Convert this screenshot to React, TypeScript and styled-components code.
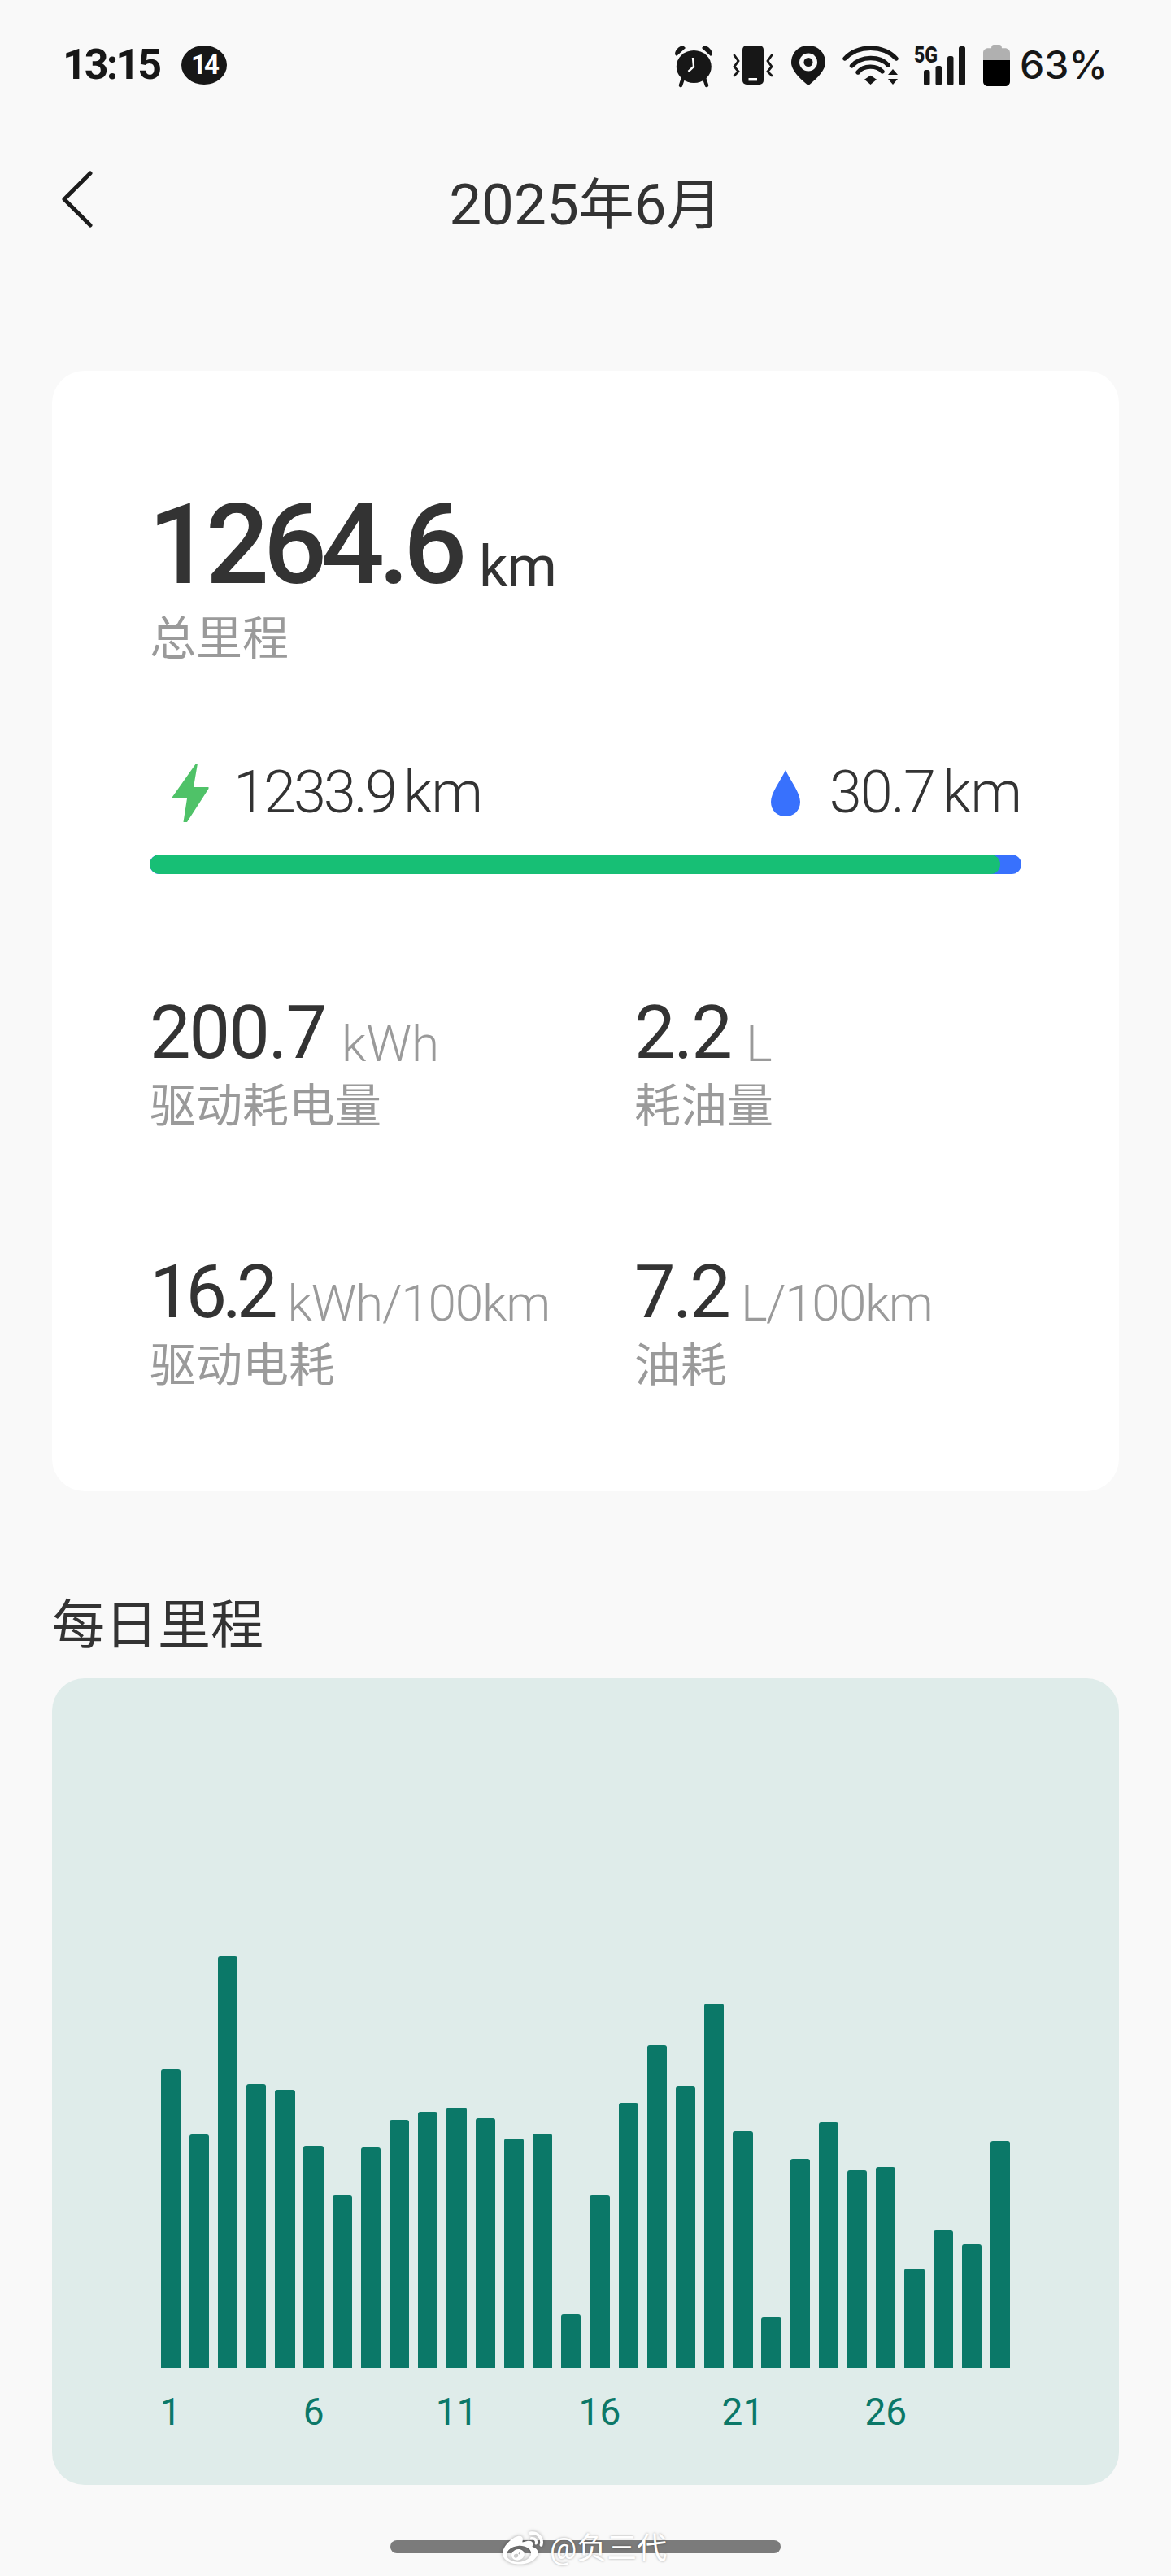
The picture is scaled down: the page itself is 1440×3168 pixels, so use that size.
import React from 'react';
import styled, { createGlobalStyle } from 'styled-components';
import { FaWeibo } from 'react-icons/fa';

const Global = createGlobalStyle`
  html, body { margin: 0; padding: 0; background: #f9f9f9; }
  * { box-sizing: border-box; }
  body { font-family: Roboto, "Noto Sans CJK SC", sans-serif; color: #333; }
`;

const Page = styled.div`
  position: relative;
  width: 1440px;
  height: 3168px;
  overflow: hidden;
  background: #f9f9f9;
`;

const StatusBar = styled.div`
  height: 160px;
  padding: 0 78px 0 77px;
  display: flex;
  align-items: center;
  justify-content: space-between;
`;
const StatusLeft = styled.div`
  display: flex;
  align-items: center;
  gap: 27px;
`;
const StatusRight = styled.div`
  display: flex;
  align-items: center;
`;
const Clock = styled.span`
  font: 700 52px/60px Roboto, sans-serif;
  letter-spacing: -3px;
  color: #171717;
`;
const Badge = styled.span`
  width: 56px;
  height: 48px;
  border-radius: 50%;
  background: #171717;
  color: #fff;
  display: flex;
  align-items: center;
  justify-content: center;
  font: 700 33px/48px Roboto, sans-serif;
  letter-spacing: -3px;
`;
const StatusIcon = styled.svg<{ $ml?: number }>`
  display: block;
  flex: none;
  overflow: visible;
  margin-left: ${(p) => p.$ml ?? 0}px;
`;
const Percent = styled.span`
  margin-left: 12px;
  font: 500 48px/60px Inter, sans-serif;
  color: #171717;
`;

const Header = styled.div`
  height: 180px;
  padding: 0 76px;
  display: flex;
  align-items: center;
  position: relative;
`;
const BackIcon = styled.svg`
  display: block;
  margin-top: -10px;
`;
const Title = styled.h1`
  position: absolute;
  left: 0;
  right: 0;
  top: 50px;
  margin: 0;
  text-align: center;
  font-weight: 400;
  font-size: 68px;
  line-height: 84px;
  color: #333;
`;
const TitleNum = styled.span`
  font-size: 71px;
`;

const Card = styled.section`
  margin: 116px 64px 0;
  height: 1378px;
  padding: 154px 120px 0;
  background: #fff;
  border-radius: 40px;
`;
const Total = styled.div`
  height: 120px;
  line-height: 120px;
  white-space: nowrap;
  font-size: 138px;
  font-weight: 500;
  letter-spacing: -7.6px;
  margin-left: -2px;
  color: #333;
`;
const TotalUnit = styled.span`
  margin-left: 22px;
  font-size: 70px;
  font-weight: 400;
  letter-spacing: -1px;
  vertical-align: -4px;
`;
const Label = styled.div`
  height: 60px;
  line-height: 60px;
  font-size: 57px;
  color: #9a9a9a;
  white-space: nowrap;
`;
const TotalLabel = styled(Label)`
  margin-top: 26px;
`;
const Split = styled.div`
  margin-top: 119px;
  height: 80px;
  display: flex;
  justify-content: space-between;
  align-items: center;
  padding: 0 0 0 28px;
`;
const SplitItem = styled.div<{ $gap: number }>`
  display: flex;
  align-items: center;
  gap: ${(p) => p.$gap}px;
`;
const SplitValue = styled.span<{ $spacing: number }>`
  font-size: 72px;
  line-height: 80px;
  font-weight: 300;
  letter-spacing: ${(p) => p.$spacing}px;
  white-space: nowrap;
`;
const SplitUnit = styled.span`
  margin-left: 10px;
  letter-spacing: -1px;
`;
const Progress = styled.div`
  margin-top: 36px;
  height: 24px;
  border-radius: 12px;
  background: #3871fd;
  overflow: hidden;
`;
const ProgressFill = styled.div`
  height: 100%;
  border-radius: 12px;
  background: #17bf75;
`;
const Stats = styled.div`
  margin-top: 146px;
  display: grid;
  grid-template-columns: 596px 1fr;
  row-gap: 149px;
`;
const Stat = styled.div``;
const StatValue = styled.div`
  height: 100px;
  line-height: 100px;
  font-size: 90px;
  font-weight: 400;
  white-space: nowrap;
  color: #333;
`;
const StatNumber = styled.span<{ $spacing: number }>`
  letter-spacing: ${(p) => p.$spacing}px;
`;
const StatUnit = styled.span<{ $gap: number; $spacing: number }>`
  margin-left: ${(p) => p.$gap}px;
  font-size: 62px;
  font-weight: 300;
  letter-spacing: ${(p) => p.$spacing}px;
  color: #9a9a9a;
  vertical-align: -4px;
`;
const StatLabel = styled(Label)`
  margin-top: 10px;
`;

const SectionTitle = styled.h2`
  margin: 125px 64px 0;
  height: 80px;
  line-height: 80px;
  font-size: 65px;
  font-weight: 400;
  color: #333;
`;
const ChartPanel = styled.section`
  margin: 25px 64px 0;
  height: 992px;
  padding: 248px 0 0 133.5px;
  background: #dfecea;
  border-radius: 40px;
`;
const Columns = styled.div`
  display: flex;
  gap: 10.9px;
`;
const Column = styled.div`
  width: 24.3px;
  display: flex;
  flex-direction: column;
  align-items: center;
`;
const BarSlot = styled.div`
  width: 100%;
  height: 600px;
  display: flex;
  align-items: flex-end;
`;
const Bar = styled.div`
  width: 100%;
  background: #0b7868;
  border-radius: 3px 3px 0 0;
`;
const DayLabel = styled.div`
  margin-top: 29px;
  height: 50px;
  line-height: 50px;
  font-size: 46px;
  color: #0b7868;
  white-space: nowrap;
`;

const HomeBar = styled.div`
  margin: 68px auto 0;
  width: 480px;
  height: 16px;
  border-radius: 8px;
  background: #7b7b7b;
`;
const Watermark = styled.div`
  position: absolute;
  left: 618px;
  top: 3110px;
  display: flex;
  align-items: center;
  gap: 8px;
  color: #fff;
  font-size: 37px;
  line-height: 44px;
  text-shadow: 0 0 3px rgba(0, 0, 0, 0.35);
  svg {
    filter: drop-shadow(0 0 2px rgba(0, 0, 0, 0.35));
  }
`;

const tops = [452, 649, 112, 498, 515, 682, 832, 689, 605, 581, 568, 599, 661, 646, 1191, 833, 554, 379, 505, 255, 638, 1200, 722, 613, 757, 746, 1053, 939, 980, 669];
const heights = tops.map((t) => (1352 - t) / 2.45);

const stats = [
  { value: '200.7', spacing: -2, unit: 'kWh', gap: 20, unitSpacing: 0, label: '驱动耗电量' },
  { value: '2.2', spacing: -2, unit: 'L', gap: 18, unitSpacing: 0, label: '耗油量' },
  { value: '16.2', spacing: -6, unit: 'kWh/100km', gap: 18, unitSpacing: -1.2, label: '驱动电耗' },
  { value: '7.2', spacing: -3, unit: 'L/100km', gap: 15, unitSpacing: -1.5, label: '油耗' },
];

const AlarmIcon = () => (
  <StatusIcon width="48" height="50" viewBox="0 0 48 50">
    <ellipse cx="24.3" cy="27" rx="21.5" ry="20" fill="#171717" />
    <path d="M1 12 C1 6 6 2 11 1 L14 4 L3 14 Z M47 12 C47 6 42 2 37 1 L34 4 L45 14 Z" fill="#171717" />
    <path d="M8 50 L11 41 M40 50 L37 41" stroke="#171717" strokeWidth="4.5" strokeLinecap="round" />
    <path d="M23 16 L24 27 L17.5 33" fill="none" stroke="#fff" strokeWidth="2.4" />
  </StatusIcon>
);

const VibrateIcon = () => (
  <StatusIcon $ml={23} width="51" height="48" viewBox="0 0 51 48">
    <rect x="13" y="0" width="26" height="48" rx="5" fill="#171717" />
    <rect x="20.5" y="40" width="10.5" height="3.4" fill="#fff" />
    <path d="M3 12 L8 19 L3 26 L8 32 L3 37" fill="none" stroke="#171717" strokeWidth="2.8" strokeLinecap="round" />
    <path d="M49 12 L44 19 L49 26 L44 32 L49 37" fill="none" stroke="#171717" strokeWidth="2.8" strokeLinecap="round" />
  </StatusIcon>
);

const PinIcon = () => (
  <StatusIcon $ml={22} width="42" height="49" viewBox="0 0 42 49">
    <path d="M21 0 C33 0 42 9 42 21 C42 31 30 42 21 49 C12 42 0 31 0 21 C0 9 9 0 21 0 Z" fill="#171717" />
    <circle cx="21" cy="20.5" r="11" fill="#f9f9f9" />
    <circle cx="21" cy="20.5" r="5.5" fill="#171717" />
  </StatusIcon>
);

const WifiIcon = () => (
  <StatusIcon $ml={22} width="67" height="48" viewBox="0 0 67 48">
    <g fill="none" stroke="#171717" strokeWidth="5.4" strokeLinecap="round">
      <path d="M2 16 C18 -1 49 -1 65 16" />
      <path d="M10.5 25 C22 12.5 45 12.5 55 24" />
      <path d="M18 33 C25 24 41 24 48 32" />
    </g>
    <path d="M26 41.7 L33.5 36.7 L41 41.7 L33.5 48 Z M61 29 L67 36 L55 36 Z M55 41 L67 41 L61 48 Z" fill="#171717" />
  </StatusIcon>
);

const SignalIcon = () => (
  <StatusIcon $ml={19} width="64" height="49" viewBox="0 0 64 49">
    <text x="1" y="21" fontFamily="Roboto, sans-serif" fontWeight="900" fontSize="27" textLength="29" lengthAdjust="spacingAndGlyphs" fill="#171717">5G</text>
    <rect x="13" y="30" width="7.5" height="19" rx="2.5" fill="#171717" />
    <rect x="27.5" y="25" width="7.5" height="24" rx="2.5" fill="#171717" />
    <rect x="42" y="13" width="7.5" height="36" rx="2.5" fill="#171717" />
    <rect x="56" y="1" width="8" height="48" rx="2.5" fill="#171717" />
  </StatusIcon>
);

const BatteryIcon = () => (
  <StatusIcon $ml={22} width="33" height="51" viewBox="0 0 33 51">
    <path d="M0 19 L0 10 C0 6.5 3 4.3 6 4.3 L10 4.3 C10 1.5 11.5 0 13 0 L20 0 C21.5 0 23 1.5 23 4.3 L27 4.3 C30 4.3 33 6.5 33 10 L33 19 Z" fill="#b0b0b0" />
    <path d="M0 19 L33 19 L33 45 C33 49 30 51 27 51 L6 51 C3 51 0 49 0 45 Z" fill="#000" />
  </StatusIcon>
);

const IconBox = styled.svg`
  display: block;
  flex: none;
`;

const Bolt = () => (
  <IconBox width="45" height="72" viewBox="0 0 45 72">
    <polygon points="29,0 31,0 26,29 44.5,29 44.5,31 18,72 13.5,72 18,43 0,43 0,41" fill="#4fc268" />
  </IconBox>
);

const Drop = () => (
  <IconBox width="36" height="57" viewBox="0 0 36 57">
    <path d="M18 0 C24 13 36 28 36 39 C36 50 28 57 18 57 C8 57 0 50 0 39 C0 28 12 13 18 0 Z" fill="#3871fd" />
  </IconBox>
);

export default function App() {
  return (
    <Page>
      <Global />
      <StatusBar>
        <StatusLeft>
          <Clock>13:15</Clock>
          <Badge>14</Badge>
        </StatusLeft>
        <StatusRight>
          <AlarmIcon />
          <VibrateIcon />
          <PinIcon />
          <WifiIcon />
          <SignalIcon />
          <BatteryIcon />
          <Percent>63%</Percent>
        </StatusRight>
      </StatusBar>

      <Header>
        <BackIcon width="38" height="70" viewBox="0 0 38 70">
          <polyline points="35,3 3,35 35,67" fill="none" stroke="#1c1c1c" strokeWidth="5" strokeLinecap="round" strokeLinejoin="round" />
        </BackIcon>
        <Title>
          <TitleNum>2025</TitleNum>年<TitleNum>6</TitleNum>月
        </Title>
      </Header>

      <Card>
        <Total>
          1264.6<TotalUnit>km</TotalUnit>
        </Total>
        <TotalLabel>总里程</TotalLabel>

        <Split>
          <SplitItem $gap={30}>
            <Bolt />
            <SplitValue $spacing={-3}>
              1233.9<SplitUnit>km</SplitUnit>
            </SplitValue>
          </SplitItem>
          <SplitItem $gap={36}>
            <Drop />
            <SplitValue $spacing={-2}>
              30.7<SplitUnit>km</SplitUnit>
            </SplitValue>
          </SplitItem>
        </Split>
        <Progress>
          <ProgressFill style={{ width: `${(1233.9 / 1264.6) * 100}%` }} />
        </Progress>

        <Stats>
          {stats.map((s) => (
            <Stat key={s.label}>
              <StatValue>
                <StatNumber $spacing={s.spacing}>{s.value}</StatNumber>
                <StatUnit $gap={s.gap} $spacing={s.unitSpacing}>{s.unit}</StatUnit>
              </StatValue>
              <StatLabel>{s.label}</StatLabel>
            </Stat>
          ))}
        </Stats>
      </Card>

      <SectionTitle>每日里程</SectionTitle>
      <ChartPanel>
        <Columns>
          {heights.map((h, i) => (
            <Column key={i}>
              <BarSlot>
                <Bar style={{ height: `${h}px` }} />
              </BarSlot>
              {i % 5 === 0 ? <DayLabel>{i + 1}</DayLabel> : null}
            </Column>
          ))}
        </Columns>
      </ChartPanel>

      <HomeBar />
      <Watermark>
        <FaWeibo size={50} />
        <span>@负三代</span>
      </Watermark>
    </Page>
  );
}
